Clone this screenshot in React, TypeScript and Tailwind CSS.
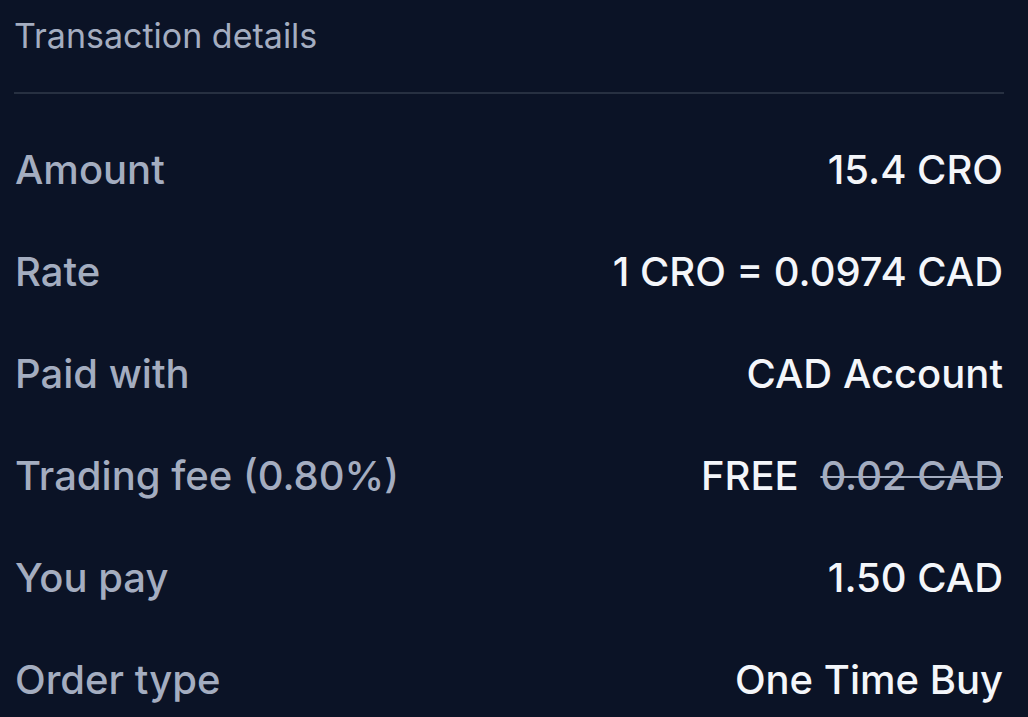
const rows: [string, React.ReactNode][] = [
  ["Amount", "15.4 CRO"],
  ["Rate", "1 CRO = 0.0974 CAD"],
  ["Paid with", "CAD Account"],
  [
    "Trading fee (0.80%)",
    <>
      FREE <span className="ml-[11px] text-[#a4adc0] line-through decoration-2">0.02 CAD</span>
    </>,
  ],
  ["You pay", "1.50 CAD"],
  ["Order type", "One Time Buy"],
];

export default function App() {
  return (
    <div
      className="h-[717px] w-[1028px] overflow-hidden bg-[#0b1326] px-[14px]"
      style={{ fontFamily: "Inter, 'Noto Sans', sans-serif" }}
    >
      <div className="pt-[16px] pb-[36px] text-[34px] leading-[40px] text-[#a4adc0]">
        Transaction details
      </div>
      <div className="mr-[10px] h-[2px] bg-[#273041]" />
      <div className="pt-[50px]">
        {rows.map(([label, value]) => (
          <div
            key={label}
            className="flex h-[102px] items-start justify-between pr-[11px] pl-px text-[40px] leading-[52px] font-medium"
          >
            <span className="text-[#a4adc0]">{label}</span>
            <span className="text-[#f4f6fa]">{value}</span>
          </div>
        ))}
      </div>
    </div>
  );
}
